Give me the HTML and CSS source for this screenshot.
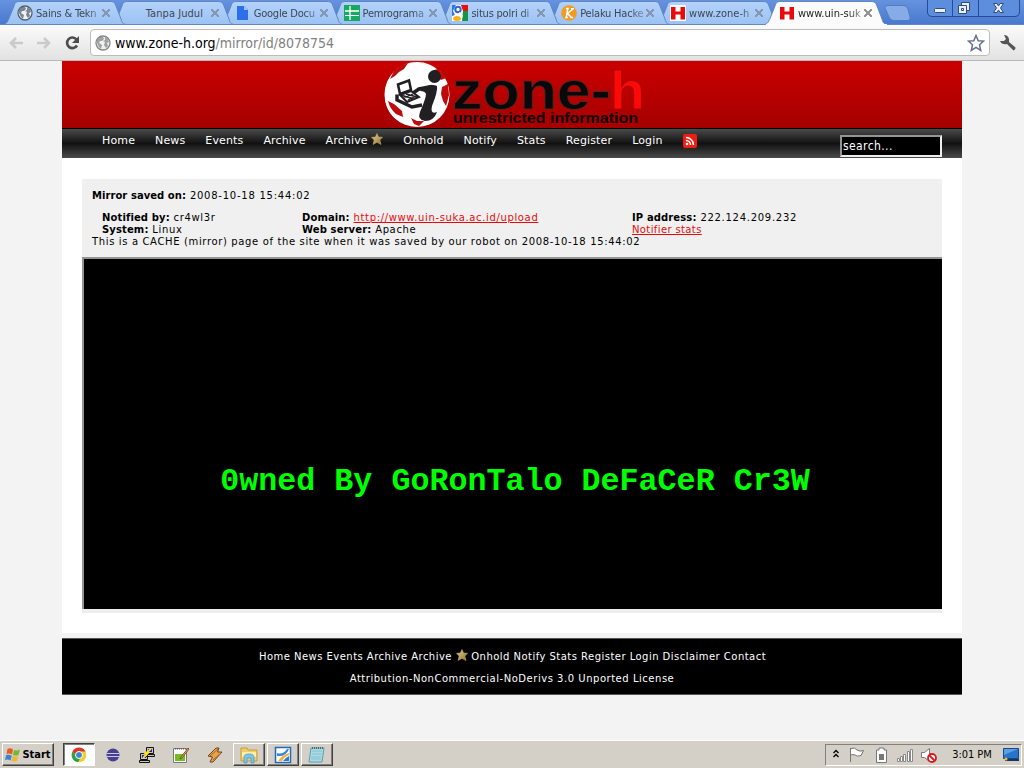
FILE: index.html
```
<!DOCTYPE html>
<html lang="en">
<head>
<meta charset="utf-8">
<title>www.uin-suka.ac.id hacked</title>
<link rel="stylesheet" href="styles.css">
</head>
<body>
<svg class="defs" width="0" height="0">
  <defs>
    <linearGradient id="tabfill" x1="0" y1="0" x2="0" y2="1"><stop offset="0" stop-color="#b3d2fb"/><stop offset="1" stop-color="#9cc2f3"/></linearGradient>
    <linearGradient id="gold" x1="0" y1="0" x2="1" y2="1"><stop offset="0" stop-color="#ead89a"/><stop offset="1" stop-color="#8b6c2c"/></linearGradient>
    <symbol id="tab" viewBox="0 0 124 25"><path d="M0 24.5C4 24 5 21 7 16L11 6C12 2 14 1.500 17 1.500H107C111 1.500 112 3 113 6L118 19C119 23 120 24 123 24.500" stroke="#5f87c3"/></symbol>
    <symbol id="globe" viewBox="0 0 16 16"><circle cx="8" cy="8" r="7" fill="#eef2f5" stroke="currentColor" stroke-width="1.300"/><path d="M2 5L5 2L8 2L9 4L7 6L5 6L4 8L7 10L6 14L4 12L2 8ZM10 2L13 4L14 7L12 8L13 11L11 13L9 10L10 7L8 6L10 5Z" fill="currentColor" opacity=".75"/></symbol>
    <symbol id="star" viewBox="0 0 12 12"><path d="M6 .5L7.600 4L11.500 4.300L8.800 7L10 11.400L6 9.300L2 11.400L3.200 7L.5 4.300L4.400 4Z" fill="url(#gold)" stroke="#b59d60" stroke-width=".7"/></symbol>
    <symbol id="h" viewBox="0 0 16 16"><path d="M0 0H16V16H0Z" fill="#fff"/><path d="M1 2H5.500V6.500H10.500V2H15V14.500H10.500V9.500H5.500V14.500H1Z" fill="#e90b0b"/></symbol>
  </defs>
</svg>

<div class="tabstrip">
  <svg class="tabshapes" width="1024" height="25">
    <g fill="url(#tabfill)">
      <use href="#tab" x="656" width="124" height="25"/><use href="#tab" x="547" width="124" height="25"/>
      <use href="#tab" x="438" width="124" height="25"/><use href="#tab" x="329" width="124" height="25"/>
      <use href="#tab" x="220" width="124" height="25"/><use href="#tab" x="111" width="124" height="25"/>
      <use href="#tab" x="3" width="124" height="25"/>
    </g>
    <path d="M0 24.500H1024" stroke="#5f87c3"/>
    <g fill="#fbfbfb"><use href="#tab" x="764" width="124" height="25"/></g>
    <path d="M766 24.500H887" stroke="#fbfbfb"/>
    <path d="M887 5.500H904Q907 6 908 9L910 17Q911 20 908 20.500H893Q890 20 889 17L885 8Q884 6 887 5.500Z" fill="#86abe6" stroke="#507cc4"/>
    <path d="M927.500 0V13Q928 16.500 932 16.500H1015Q1019 16.500 1019.500 13V0" fill="#5d8ddd" stroke="#254c94"/>
    <path d="M952.500 0V16M978.500 0V16" stroke="#254c94"/>
    <g fill="#e8eefa" stroke="#344c78">
      <rect x="934.500" y="8.500" width="11" height="4" rx="1"/>
      <path d="M961.500 2.500H969.500V10.500H961.500Z"/>
      <path d="M958.500 5.500H966.500V13.500H958.500ZM961.500 8.500H963.500V10.500H961.500Z" fill-rule="evenodd"/>
      <path d="M993.500 3.500H997L998.500 6L1000 3.500H1003.500L1000.500 8L1003.500 12.500H1000L998.500 10L997 12.500H993.500L996.500 8Z"/>
    </g>
  </svg>
  <div class="tabs">
    <div class="tab"><svg class="fav dark"><use href="#globe"/></svg><span class="t">Sains &amp; Tekn</span><i class="x"></i></div>
    <div class="tab"><span class="fav"></span><span class="t solid">Tanpa Judul</span><i class="x"></i></div>
    <div class="tab"><svg class="fav" viewBox="0 0 16 16"><path d="M2 1H9L13 5V15H2Z" fill="#2b70ea"/><path d="M9 1L13 5H9Z" fill="#9fc2ff"/></svg><span class="t">Google Docu</span><i class="x"></i></div>
    <div class="tab"><svg class="fav" viewBox="0 0 16 16"><path d="M0 0H16V16H0Z" fill="#18a862"/><path d="M6 1V15M1 6H15" stroke="#fff" stroke-width="1.300"/><path d="M1 10.500H15" stroke="#fff"/></svg><span class="t">Pemrograma</span><i class="x"></i></div>
    <div class="tab"><svg class="fav" viewBox="0 0 16 16"><path d="M0 0H16V16H0Z" fill="#fff"/><path d="M9 0H16V6H11Z" fill="#f00b0b"/><path d="M11 6H16V16H10Z" fill="#109648"/><path d="M0 0H4L1 6L3 10L0 11Z" fill="#3477e8"/><ellipse cx="5" cy="13.500" rx="4" ry="2.500" fill="#f4b21b"/><circle cx="6" cy="4.500" r="2.700" fill="#fff" stroke="#2f65d1" stroke-width="2"/><path d="M7 8Q11 10 9 13" fill="none" stroke="#fff" stroke-width="2"/></svg><span class="t">situs polri di</span><i class="x"></i></div>
    <div class="tab"><svg class="fav" viewBox="0 0 16 16"><circle cx="8" cy="8" r="7.800" fill="#f39a20"/><path d="M6.700 3.500L5.300 12.500M12 4L6.500 8.500L10.500 12.500M5 3.500H8M4 12.500H7M10 3.700H13M9 12.500H12" stroke="#fff" stroke-width="1.500" fill="none"/></svg><span class="t">Pelaku Hacke</span><i class="x"></i></div>
    <div class="tab"><svg class="fav"><use href="#h"/></svg><span class="t wide">www.zone-h</span><i class="x"></i></div>
    <div class="tab on"><svg class="fav"><use href="#h"/></svg><span class="t wide">www.uin-suk</span><i class="x"></i></div>
  </div>
</div>

<div class="toolbar">
  <svg class="navicons" width="90" height="36" fill="none">
    <path d="M23 18H11M16 13L11 18L16 23" stroke="#cacaca" stroke-width="2.600"/>
    <path d="M37 18H49M44 13L49 18L44 23" stroke="#cacaca" stroke-width="2.600"/>
    <path d="M76.500 14.500A5.300 5.300 0 1 0 77 20.500" stroke="#4c4c4c" stroke-width="2.600"/><path d="M79 11V18H72Z" fill="#4c4c4c"/>
  </svg>
  <div class="omnibox">
    <svg class="site" width="16" height="16"><use href="#globe"/></svg>
    <span class="url">www.zone-h.org<span class="path">/mirror/id/8078754</span></span>
    <svg width="18" height="18" viewBox="0 0 18 18"><path d="M9 1.500L11.200 6.700L16.500 7.100L12.500 10.700L13.700 16.300L9 13.300L4.300 16.300L5.500 10.700L1.500 7.100L6.800 6.700Z" fill="#fff" stroke="#64708f" stroke-width="1.500"/></svg>
  </div>
  <svg class="wrench" width="18" height="18" viewBox="0 0 18 18"><path d="M5 1Q9 1 10 5L10 8L16.500 13.500Q17 15.500 14.500 16.500L8 10Q3 11 1 7L5 7L7 5Z" fill="#555"/></svg>
</div>

<main class="page">
  <header class="banner">
    <svg width="900" height="67" viewBox="62 61 900 67">
      <circle cx="417" cy="94.500" r="32.500" fill="#fff"/>
      <path d="M394 71L402 65L408 63L404 69L399 72L395 76L390 79ZM438 69L446 78L441 80L437 76L431 73L434 70ZM442 87L448 84L449 95L446 106L443 101L441 94ZM388 101L394 104L402 111L403 117L396 114Q390 109 388 101ZM411 118L417 121L424 121L419 126L414 124Z" fill="#bd0c0c"/>
      <path d="M386 101Q390 118 405 123" fill="none" stroke="#fff" stroke-width="1.500"/>
      <circle cx="434.500" cy="76.500" r="6.500" fill="#211f22"/>
      <path d="M398 84.500L409 80.500L411 90L400 94Z" fill="#fff" stroke="#211f22" stroke-width="2.500"/>
      <path d="M400 95L411 91L419 97L407 102Z" fill="#eee" stroke="#211f22" stroke-width="2"/>
      <path d="M402 95.500L413 98.500M404 98L413 94M408 100L416 96M406 94L417 97" stroke="#211f22" stroke-width="1.300"/>
      <path d="M432 86.500L419 89L413 93M397 94.500L397 100L412 107L422 105" fill="none" stroke="#211f22" stroke-width="3.500"/>
      <path d="M422 88Q432 83 437 86Q438 91 432 106Q430 115 437 112Q434 121 425 121Q417 120 420 112Q426 98 426 94Q425 91 420 91Z" fill="#211f22"/>
      <g class="word"><text x="452" y="109" textLength="159" lengthAdjust="spacingAndGlyphs" fill="#090909" stroke="#602020">zone-</text><text x="610" y="109" textLength="35" lengthAdjust="spacingAndGlyphs" fill="#ff0808" stroke="#a90808">h</text></g>
      <text class="slogan" x="453" y="122.500" textLength="185" lengthAdjust="spacingAndGlyphs">unrestricted information</text>
    </svg>
  </header>
  <nav class="menu">
    <a>Home</a><a>News</a><a>Events</a><a>Archive</a><a>Archive <svg class="star"><use href="#star"/></svg></a><a>Onhold</a><a>Notify</a><a>Stats</a><a>Register</a><a>Login</a>
    <svg class="rss" width="14" height="14" viewBox="0 0 14 14"><rect width="14" height="14" rx="2" fill="#f01d12"/><circle cx="4" cy="10" r="1.300" fill="#fff"/><path d="M3 6.500A4.500 4.500 0 0 1 7.500 11M3 3.500A7.500 7.500 0 0 1 10.500 11" fill="none" stroke="#fff" stroke-width="1.600"/></svg>
    <div class="search">search...</div>
  </nav>
  <section class="content">
    <div class="info">
      <p class="saved"><b>Mirror saved on:</b> 2008-10-18 15:44:02</p>
      <div class="facts">
        <div><b>Notified by:</b> cr4wl3r<br><b>System:</b> Linux</div>
        <div><b>Domain:</b> <a>http://www.uin-suka.ac.id/upload</a><br><b>Web server:</b> Apache</div>
        <div><b>IP address:</b> <span class="ip">222.124.209.232</span><br><a class="stats">Notifier stats</a></div>
      </div>
      <p class="cache">This is a CACHE (mirror) page of the site when it was saved by our robot on 2008-10-18 15:44:02</p>
    </div>
    <div class="frame">0wned By GoRonTalo DeFaCeR Cr3W</div>
    <div class="rule"></div>
  </section>
  <footer class="foot">
    <p class="links">Home News Events Archive Archive <svg class="star"><use href="#star"/></svg> Onhold Notify Stats Register Login Disclaimer Contact</p>
    <p class="license">Attribution-NonCommercial-NoDerivs 3.0 Unported License</p>
  </footer>
</main>

<div class="taskbar">
  <div class="btn start"><svg width="16" height="16" viewBox="0 0 16 16"><path d="M2.500 2Q5 .5 8 2.500L7 7.500Q4 6 1.500 7Z" fill="#e95a22"/><path d="M9 3Q12 4 15 2.500L13.500 8Q11 9 8 8Z" fill="#77b82e"/><path d="M1.200 8Q4 7 6.800 8.700L5.500 13.500Q3 12 0 13Z" fill="#3784d2"/><path d="M7.700 9Q11 10 13.200 9L12 14Q9 15.500 6.500 14Z" fill="#f4b72b"/></svg><b>Start</b></div>
  <div class="btn pressed"><svg width="16" height="16" viewBox="0 0 16 16"><circle cx="8" cy="8" r="7.300" fill="#f6cd29"/><path d="M1.500 4.500A7.300 7.300 0 0 1 14.500 4.500H8L4.500 8Z" fill="#dd3528"/><path d="M1.500 4.500A7.300 7.300 0 0 0 7 15.200L10 10L5 9Z" fill="#2aa24a"/><circle cx="8" cy="8" r="3.500" fill="#3b86cf" stroke="#fff"/></svg></div>
  <div class="quick"><svg width="16" height="16" viewBox="0 0 16 16"><circle cx="8" cy="8" r="6.500" fill="#473f90"/><path d="M1.500 6.500H14.500M1.500 9.500H14.500" stroke="#c7c8ed" stroke-width="1.200"/></svg></div>
  <div class="quick"><svg width="16" height="16" viewBox="0 0 16 16"><path d="M7.500 .5H14.500V6.500H7.500ZM6.500 7.500H15.500V9.500H6.500ZM1.500 6.500H8.500V12.500H1.500ZM.5 13.500H10.500V15.500H.5Z" fill="#c6c6c6" stroke="#111"/><path d="M9 2H13V5H9ZM3 8H7V11H3Z" fill="#1717e0"/><path d="M12 2L7 6H9L4 11" stroke="#ffe800" stroke-width="1.800" fill="none"/></svg></div>
  <div class="quick"><svg width="16" height="16" viewBox="0 0 16 16"><path d="M.5 1.500H13.500V15.500H.5Z" fill="#fff" stroke="#777"/><path d="M2 7H12V14H2Z" fill="#70be23"/><path d="M2 2H13" stroke="#555" stroke-dasharray="1 1"/><path d="M15 1L8 10L7 12L9 11L16 2Z" fill="#f3b548" stroke="#7a3a16" stroke-width=".8"/></svg></div>
  <div class="quick"><svg width="16" height="16" viewBox="0 0 16 16"><path d="M1 9L9 1L12 1L10.500 5L15 5L6 15L3 15L5.500 10Z" fill="#eba345" stroke="#684525"/><path d="M3 9L11 2M6 13L14 6" stroke="#a4672b"/></svg></div>
  <div class="btn"><svg width="18" height="18" viewBox="0 0 18 18"><path d="M1 2H7L8 4H17V15H1Z" fill="#efcf65" stroke="#c99c32"/><path d="M2 6H16V11H2Z" fill="#fff0a6"/><path d="M4 17V11Q4 8 9 8T14 11V17H11V12H7V17Z" fill="#79c7ef" stroke="#4a91be" stroke-width=".7"/></svg></div>
  <div class="btn"><svg width="18" height="18" viewBox="0 0 18 18"><path d="M1.500 1.500H16.500V16.500H1.500Z" fill="#fff" stroke="#236ab4" stroke-width="1.500"/><path d="M3 7Q9 9 13 3H15Q12 11 3 10Z" fill="#3186d8"/><path d="M4 15Q8 9 15 7V9Q10 11 8 15Z" fill="#f5b23a"/><path d="M9 15Q11 12 15 10V15Z" fill="#3279cc"/></svg></div>
  <div class="btn"><svg width="18" height="18" viewBox="0 0 18 18"><path d="M3 2H16L14 16H1Z" fill="#a9dbe7" stroke="#5c9cac"/><path d="M4 5H14M4 8H14M3 11H13M3 13H13" stroke="#78b6c5" stroke-width=".7"/><path d="M4 2H16" stroke="#566" stroke-dasharray="1 1" stroke-width="2"/></svg></div>
  <div class="tray">
    <svg width="112" height="22" viewBox="826 744 112 22" fill="none">
      <path d="M833.500 753L836 750.500L838.500 753M833.500 757L836 754.500L838.500 757" stroke="#000" stroke-width="1.300"/>
      <path d="M850.500 748V762M851 748.500Q855 747 857 750Q860 752 863.500 750.500L861 755.500Q857 757 855 755Q853 754 851 755" fill="#fff" stroke="#747474"/>
      <path d="M879 748H884V750H886.500V762.500H876.500V750H879Z" fill="#fff" stroke="#777"/><path d="M879 754H884V760H879Z" fill="#777"/>
      <path d="M897.500 761.500V758.500H899.500V761.500ZM900.500 761.500V756.500H902.500V761.500ZM903.500 761.500V754.500H905.500V761.500ZM907.500 761.500V751.500H909.500V761.500ZM910.500 761.500V749.500H912.500V761.500Z" fill="#fff" stroke="#888"/>
      <path d="M921.500 752.500H924.500L929.500 748.500V761.500L924.500 757.500H921.500Z" fill="#fff" stroke="#777"/><circle cx="932" cy="758" r="4" fill="#fff" stroke="#d7191e" stroke-width="1.800"/><path d="M929 755L935 761" stroke="#d7191e" stroke-width="1.800"/>
    </svg>
    <span class="clock">3:01 PM</span>
    <svg width="16" height="14" viewBox="0 0 16 14"><path d="M.5 .5H15.500V10.500H.5Z" fill="#2775ca" stroke="#174788"/><path d="M1 1H15L1 7Z" fill="#5ba0e2"/><path d="M2 11H16V13H2Z" fill="#17365e"/><circle cx="3" cy="11" r="1.500" fill="#f2bb36"/></svg>
  </div>
</div>
</body>
</html>
```
FILE: styles.css
```
* { box-sizing: border-box; }
body { margin: 0; width: 1024px; height: 768px; overflow: hidden; display: flex; flex-direction: column; background: #f3f3f3; font-family: "DejaVu Sans", Verdana, sans-serif; color: #000; }
p { margin: 0; white-space: nowrap; }
svg { display: block; flex: none; }
.defs { position: absolute; }

.tabstrip { position: relative; height: 25px; flex: none; background: linear-gradient(#6693df, #4877ce); }
.tabshapes { position: absolute; left: 0; top: 0; }
.tabs { position: relative; display: flex; padding-left: 17px; }
.tab { width: 108.850px; height: 25px; display: flex; align-items: center; flex: none; padding-top: 1px; font: 11px "DejaVu Sans Condensed", "DejaVu Sans", sans-serif; color: #3c4654; }
.on { color: #222; }
.fav { width: 16px; height: 16px; margin-right: 3px; flex: none; }
.dark { color: #53616f; }
.t { width: 66px; white-space: nowrap; letter-spacing: -.2px; -webkit-mask-image: linear-gradient(90deg, #000 75%, rgba(0,0,0,.3)); mask-image: linear-gradient(90deg, #000 75%, rgba(0,0,0,.3)); }
.wide { letter-spacing: .05px; }
.solid { -webkit-mask-image: none; mask-image: none; padding-left: 1px; letter-spacing: .05px; }
.x { width: 8px; height: 8px; background: linear-gradient(45deg, transparent 42%, #8597b3 42% 58%, transparent 58%), linear-gradient(-45deg, transparent 42%, #8597b3 42% 58%, transparent 58%); }
.on .x { filter: grayscale(1); }

.toolbar { height: 36px; flex: none; display: flex; align-items: center; background: linear-gradient(#fbfbfb, #e2e2e2); border-bottom: 1px solid #b9b9b9; }
.omnibox { width: 900px; height: 27px; display: flex; align-items: center; padding: 0 4px; background: #fff; border: 1px solid #bcbcbc; border-radius: 4px; }
.site { color: #858585; }
.url { flex: 1; margin-left: 4px; font: 14px "DejaVu Sans Condensed", "DejaVu Sans", sans-serif; letter-spacing: -.02px; }
.path { color: #808080; }
.wrench { margin-left: 9px; }

.page { width: 900px; margin: 0 auto; flex: 1; }
.banner { height: 67px; background: linear-gradient(#cb0000, #a50000); }
.word { font: bold 53px "Liberation Sans", Arial, sans-serif; }
.slogan { font: bold 14px "Liberation Sans", Arial, sans-serif; fill: #110000; }
.menu { height: 30px; display: flex; align-items: flex-start; gap: 20px; padding: 5px 20px 0 40px; background: linear-gradient(#4a4a4a, #111 50%, #4a4a4a); border-top: 1px solid #000; color: #fff; font-size: 11px; line-height: 13px; letter-spacing: .14px; white-space: nowrap; }
.star { display: inline-block; width: 12px; height: 12px; vertical-align: -1px; margin-top: -4px; }
.search { width: 102px; height: 22px; margin: 1px 0 0 auto; background: #000; border: 2px solid; border-color: #949494 #eee #eee #949494; font: 12px/19px "DejaVu Sans Condensed", sans-serif; letter-spacing: .4px; padding-left: 1px; }

.content { height: 475px; padding: 21px 20px 0; background: #fff; }
.info { height: 78px; padding: 11px 10px 0; background: #f0f0f0; font-size: 10px; line-height: 12px; letter-spacing: .64px; }
.info a { color: #e50b0b; text-decoration: underline; }
.info b { letter-spacing: .05px; }
.facts b { letter-spacing: .12px; }
.info .stats { letter-spacing: .38px; }
.ip { letter-spacing: .72px; }
.saved { letter-spacing: .75px; }
.facts { display: grid; grid-template-columns: 200px 330px 1fr; padding: 10px 10px 0; white-space: nowrap; }
.frame { height: 352px; background: #000; border: 2px solid #949494; border-right: 0; border-bottom: 0; display: flex; align-items: center; justify-content: center; padding: 95px 0 0 4px; color: #0f0; font: bold 31.700px "Liberation Mono", monospace; white-space: pre; }
.rule { height: 4px; background: #eee; }
.foot { height: 57px; margin-top: 5px; padding-top: 12px; background: #000; border-top: 1px solid #555; border-bottom: 1px solid #555; color: #fff; font-size: 10px; line-height: 12px; letter-spacing: .53px; text-align: center; }
.links { letter-spacing: .47px; padding-left: 1px; }
.license { margin-top: 10px; }

.taskbar { height: 28px; flex: none; display: flex; align-items: center; background: #d4d0c8; border-top: 1px solid #fff; padding: 0 2px; }
.btn { width: 32px; height: 23px; margin-right: 2px; display: flex; align-items: center; justify-content: center; background: #d4d0c8; border: 1px solid; border-color: #fff #404040 #404040 #fff; box-shadow: inset -1px -1px #808080; }
.start { width: 52px; margin-right: 9px; font: bold 11px "DejaVu Sans Condensed", sans-serif; gap: 1px; }
.pressed { background: #fff; border-color: #404040 #fff #fff #404040; box-shadow: inset 1px 1px #808080; margin-right: 2px; }
.quick { width: 34px; display: flex; justify-content: center; padding-right: 2px; }
.tray { height: 22px; margin-left: auto; display: flex; align-items: center; border: 1px solid; border-color: #808080 #fff #fff #808080; padding-right: 2px; }
.clock { width: 65px; text-align: center; font: 11px "DejaVu Sans Condensed", sans-serif; letter-spacing: -.05px; padding-left: 3px; }
```
